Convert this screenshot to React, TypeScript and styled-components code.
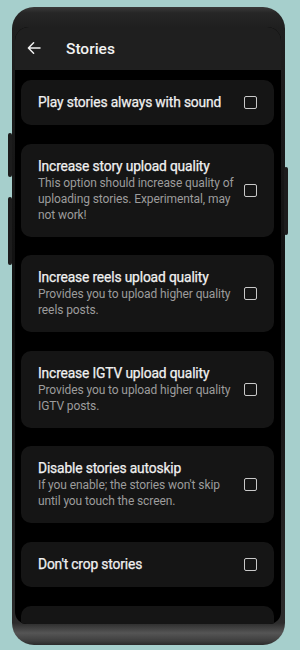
import React from "react";
import styled, { createGlobalStyle } from "styled-components";

const GlobalStyle = createGlobalStyle`
  html, body {
    margin: 0;
    padding: 0;
    background: #a6cfcc;
  }
  * {
    box-sizing: border-box;
  }
`;

type Option = {
  title: string;
  desc?: string;
};

const options: Option[] = [
  { title: "Play stories always with sound" },
  {
    title: "Increase story upload quality",
    desc: "This option should increase quality of uploading stories. Experimental, may not work!",
  },
  {
    title: "Increase reels upload quality",
    desc: "Provides you to upload higher quality reels posts.",
  },
  {
    title: "Increase IGTV upload quality",
    desc: "Provides you to upload higher quality IGTV posts.",
  },
  {
    title: "Disable stories autoskip",
    desc: "If you enable; the stories won't skip until you touch the screen.",
  },
  { title: "Don't crop stories" },
  { title: "" },
];

const App = () => {
  return (
    <Page>
      <GlobalStyle />
      <Phone>
        <SideButton $side="left" $top={126} $height={44} />
        <SideButton $side="left" $top={190} $height={68} />
        <SideButton $side="right" $top={160} $height={68} />
        <Screen>
          <Header>
            <BackButton>
              <svg width="14" height="14" viewBox="0 0 14 14" fill="none">
                <path
                  d="M13 7H1.6M6.6 1.8L1.4 7l5.2 5.2"
                  stroke="#f2f2f2"
                  strokeWidth="1.5"
                  strokeLinecap="round"
                  strokeLinejoin="round"
                />
              </svg>
            </BackButton>
            <Title>Stories</Title>
          </Header>
          <List>
            {options.map((o, i) => (
              <Card key={i}>
                <TextCol>
                  <CardTitle>{o.title}</CardTitle>
                  {o.desc && <CardDesc>{o.desc}</CardDesc>}
                </TextCol>
                {o.title && <Checkbox />}
              </Card>
            ))}
          </List>
        </Screen>
      </Phone>
    </Page>
  );
};

export default App;

const Page = styled.div`
  width: 300px;
  height: 650px;
  padding: 7px 0 0 12px;
  background: #a6cfcc;
  overflow: hidden;
`;

const Phone = styled.div`
  position: relative;
  width: 273px;
  height: 638px;
  padding: 20px 4px 21px 3px;
  border-radius: 22px;
  background: linear-gradient(
    to bottom,
    #3a3a3a 0,
    #262626 6px,
    #1f1f1f 20px,
    #0e0e0e 50%,
    #2c2c2c calc(100% - 22px),
    #555 calc(100% - 12px),
    #3e3e3e calc(100% - 4px),
    #2a2a2a 100%
  );
`;

const SideButton = styled.div<{ $side: "left" | "right"; $top: number; $height: number }>`
  position: absolute;
  top: ${(p) => p.$top}px;
  ${(p) => (p.$side === "left" ? "left: -4px;" : "right: -3px;")}
  width: 4px;
  height: ${(p) => p.$height}px;
  border-radius: 2px;
  background: #1c1c1c;
`;

const Screen = styled.div`
  height: 100%;
  border-radius: 14px 14px 12px 12px;
  overflow: hidden;
  background: #000;
  display: flex;
  flex-direction: column;
`;

const Header = styled.div`
  flex: none;
  height: 43px;
  display: flex;
  align-items: center;
  padding-left: 12px;
  background: #1f1f1f;
`;

const BackButton = styled.div`
  width: 14px;
  height: 14px;
  display: flex;
  margin-top: -1px;
`;

const Title = styled.div`
  margin-left: 25px;
  font-family: Roboto, "Liberation Sans", sans-serif;
  font-size: 15.5px;
  font-weight: 500;
  color: #f2f2f2;
`;

const List = styled.div`
  display: flex;
  flex-direction: column;
  gap: 18.6px;
  padding: 10px 7px 0 6px;
`;

const Card = styled.div`
  flex: none;
  display: flex;
  align-items: center;
  gap: 7px;
  padding: 14px 17px 14px 17px;
  border-radius: 10px;
  background: #151515;
`;

const TextCol = styled.div`
  flex: 1;
  min-width: 0;
  display: flex;
  flex-direction: column;
`;

const CardTitle = styled.div`
  font-family: Roboto, "Liberation Sans", sans-serif;
  font-size: 13.8px;
  font-weight: 400;
  line-height: 17px;
  min-height: 17px;
  color: #f0f0f0;
  letter-spacing: -0.15px;
  -webkit-text-stroke: 0.25px #f0f0f0;
`;

const CardDesc = styled.div`
  font-family: Roboto, "Liberation Sans", sans-serif;
  font-size: 12px;
  line-height: 16px;
  color: #9c9c9c;
  letter-spacing: -0.1px;
`;

const Checkbox = styled.div`
  flex: none;
  width: 13px;
  height: 13px;
  border: 1.6px solid #c9c9c9;
  border-radius: 2px;
`;
